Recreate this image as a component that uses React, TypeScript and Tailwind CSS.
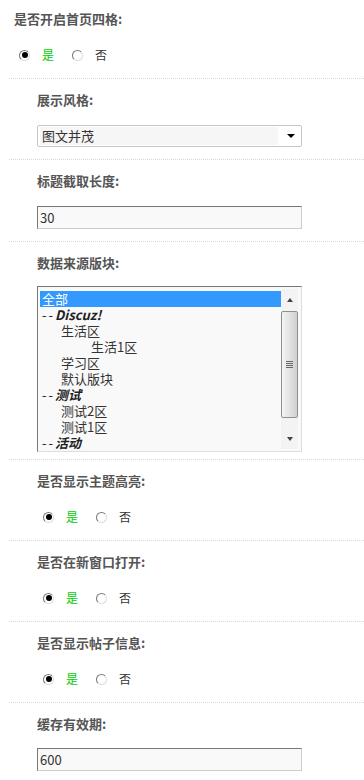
import React from 'react';

const FONT = "font-['Noto_Sans_CJK_SC','Noto_Sans',sans-serif]";

function Radio({ checked }: { checked: boolean }) {
  return (
    <span className="relative inline-flex h-[11px] w-[11px] items-center justify-center rounded-full border border-t-[#777] border-l-[#777] border-b-[#ddd] border-r-[#ddd] bg-white">
      {checked && <span className="h-[6px] w-[6px] rounded-full bg-black" />}
    </span>
  );
}

function YesNo() {
  return (
    <div className="flex h-5 items-center pl-[6px] text-[12px]">
      <Radio checked />
      <span className="ml-[12px] text-[#00cc00]">是</span>
      <span className="ml-[18px] flex items-center"><Radio checked={false} /></span>
      <span className="ml-[12px] text-[#333]">否</span>
    </div>
  );
}

function Label({ children }: { children: React.ReactNode }) {
  return <div className="h-5 text-[13px] font-bold leading-5 text-[#555]">{children}</div>;
}

function Section({ label, children, pb = 'pb-[12px]', mt = 'mt-[15px]' }: { label: string; children: React.ReactNode; pb?: string; mt?: string }) {
  return (
    <div className={`border-t border-dotted border-[#c9dce8] pl-[28px] pt-[11px] ${pb}`}>
      <Label>{label}</Label>
      <div className={mt}>{children}</div>
    </div>
  );
}

function TextBox({ value }: { value: string }) {
  return (
    <div className="flex h-[23px] w-[265px] items-center border border-t-[#777] border-l-[#777] border-b-[#ccc] border-r-[#ccc] bg-[#f9f9f9] pl-[2px] text-[13px] text-[#333]">
      {value}
    </div>
  );
}

const ITEMS: { text: string; indent: number; group?: boolean; selected?: boolean }[] = [
  { text: '全部', indent: 2, selected: true },
  { text: 'Discuz!', indent: 2, group: true },
  { text: '生活区', indent: 21 },
  { text: '生活1区', indent: 51 },
  { text: '学习区', indent: 21 },
  { text: '默认版块', indent: 21 },
  { text: '测试', indent: 2, group: true },
  { text: '测试2区', indent: 21 },
  { text: '测试1区', indent: 21 },
  { text: '活动', indent: 2, group: true },
];

function ListBox() {
  return (
    <div className="flex h-[166px] w-[265px] overflow-hidden border border-t-[#777] border-l-[#777] border-b-[#ddd] border-r-[#ddd] bg-[#f9f9f9]">
      <div className="flex-1 pl-[2px] pt-[4px]">
        {ITEMS.map(it => (
          <div key={it.text}
            className={`flex h-4 items-center text-[13px] leading-4 ${it.selected ? 'bg-[#3399ff] text-white' : 'text-[#333]'}`}
            style={{ paddingLeft: it.indent }}>
            {it.group ? (
              <>
                <span className="tracking-[2px] text-[#222]">--</span>
                <span className="font-bold italic text-[#222]">{it.text}</span>
              </>
            ) : it.text}
          </div>
        ))}
      </div>
      <div className="my-[2px] mr-[3px] flex w-[17px] flex-col bg-[#f3f3f3]">
        <div className="flex h-[22px] items-center justify-center">
          <span className="h-0 w-0 border-x-[3.5px] border-b-[4px] border-x-transparent border-b-[#444]" />
        </div>
        <div className="relative flex h-[107px] items-center justify-center rounded-[2px] border border-[#8f8f8f] bg-gradient-to-r from-[#f4f4f4] via-[#e2e2e2] to-[#cfcfcf]">
          <div className="flex flex-col gap-[1px]">
            <span className="h-px w-[7px] bg-[#666]" />
            <span className="h-px w-[7px] bg-[#666]" />
            <span className="h-px w-[7px] bg-[#666]" />
            <span className="h-px w-[7px] bg-[#666]" />
          </div>
        </div>
        <div className="flex flex-1 items-end justify-center pb-[8px]">
          <span className="h-0 w-0 border-x-[3.5px] border-t-[4px] border-x-transparent border-t-[#444]" />
        </div>
      </div>
    </div>
  );
}

export default function App() {
  return (
    <div className={`min-h-[780px] bg-white ${FONT}`}>
      <div className="ml-[9px]">
        <div className="pl-[5px] pt-[9px] pb-[13px]">
          <Label>是否开启首页四格:</Label>
          <div className="mt-[16px] -ml-px">
            <YesNo />
          </div>
        </div>

        <Section label="展示风格:">
          <div className="flex h-[22px] w-[265px] items-center rounded-[2px] border border-[#c6c6c6] bg-white pl-[2px]">
            <div className="flex h-[18px] w-[238px] items-center bg-[#f6f6f6] pl-[2px] text-[13px] text-[#333]">图文并茂</div>
            <span className="ml-[9px] h-0 w-0 border-x-[4px] border-t-[4px] border-x-transparent border-t-black" />
          </div>
        </Section>

        <Section label="标题截取长度:" pb="pb-[12px]">
          <TextBox value="30" />
        </Section>

        <Section label="数据来源版块:" mt="mt-[13px]" pb="pb-[7px]">
          <ListBox />
        </Section>

        <Section label="是否显示主题高亮:" mt="mt-[16px]" pb="pb-[13px]">
          <YesNo />
        </Section>

        <Section label="是否在新窗口打开:" mt="mt-[16px]" pb="pb-[13px]">
          <YesNo />
        </Section>

        <Section label="是否显示帖子信息:" mt="mt-[16px]" pb="pb-[13px]">
          <YesNo />
        </Section>

        <Section label="缓存有效期:" mt="mt-[14px]" pb="pb-[6px]">
          <TextBox value="600" />
        </Section>
      </div>
    </div>
  );
}
